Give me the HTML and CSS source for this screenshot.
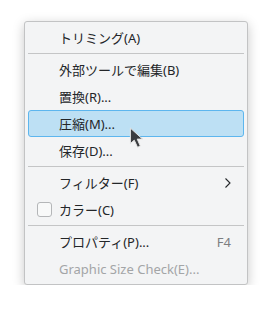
FILE: index.html
```html
<!DOCTYPE html>
<html>
	<head>
		<title>Menu</title>
		<link rel="stylesheet" href="styles.css">
	</head>
	<body>
		<div class="menu">
			<div class="item"><span class="slot"></span><span class="label">トリミング(A)</span></div>
			<div class="sep"></div>
			<div class="item"><span class="slot"></span><span class="label">外部ツールで編集(B)</span></div>
			<div class="item"><span class="slot"></span><span class="label">置換(R)...</span></div>
			<div class="item hover"><span class="slot"></span><span class="label">圧縮(M)...</span></div>
			<div class="item"><span class="slot"></span><span class="label">保存(D)...</span></div>
			<div class="sep"></div>
			<div class="item">
				<span class="slot"></span><span class="label">フィルター(F)</span>
				<svg class="chevron" width="6" height="10" viewBox="0 0 6 10"><path d="M0.5 0.5 L5 5 L0.5 9.5" fill="none" stroke="#232629" stroke-width="1.1"/></svg>
			</div>
			<div class="item"><span class="slot"><span class="check"></span></span><span class="label">カラー(C)</span></div>
			<div class="sep"></div>
			<div class="item"><span class="slot"></span><span class="label">プロパティ(P)...</span><span class="key">F4</span></div>
			<div class="item disabled"><span class="slot"></span><span class="label">Graphic Size Check(E)...</span></div>
		</div>

		<!-- mouse pointer over the hovered row -->
		<svg class="cursor" width="16" height="22" viewBox="0 0 14 20">
			<path d="M1 1 L1 15 L4.5 12 L7.5 18.5 L10 17.3 L7.2 11 L12 11 Z" fill="#3b3d40" stroke="#e8e8e8" stroke-width="0.9" stroke-linejoin="round"/>
		</svg>
	</body>
</html>
```

FILE: styles.css
```css
body {
	margin: 0;
	background-color: white;
	font-family: "Noto Sans", "Noto Sans CJK JP", sans-serif;
	font-size: 13px;
	color: #232629;
}

div.menu {
	margin: 21px 0 0 24px;
	width: 222px;
	padding: 2px 0 2px 0;
	background-color: #f3f4f5;
	border: 1px solid #c2c3c4;
	border-radius: 3px;
	box-shadow: 0 3px 12px rgba(0, 0, 0, 0.22);
}

div.item {
	display: flex;
	align-items: center;
	height: 25px;
	margin: 0 3px;
	padding: 0 12px 0 8px;
	border: 1px solid transparent;
	border-radius: 3px;
}

div.item.hover {
	background-color: #bde0f4;
	border-color: #5db6ee;
}

div.item.disabled {
	color: #a3a5a7;
}

span.slot {
	width: 15px;
	height: 15px;
	margin-right: 7px;
	flex: none;
}

span.check {
	display: block;
	box-sizing: border-box;
	width: 15px;
	height: 15px;
	border: 1px solid #b4b6b8;
	border-radius: 3px;
	background-color: #f8f9f9;
}

span.label {
	flex: 1;
	white-space: nowrap;
}

span.key {
	color: #7c7e80;
}

svg.chevron {
	display: block;
}

div.sep {
	height: 1px;
	margin: 2px 3px;
	background-color: #c4c5c6;
}

svg.cursor {
	position: absolute;
	left: 129px;
	top: 127px;
}
```
